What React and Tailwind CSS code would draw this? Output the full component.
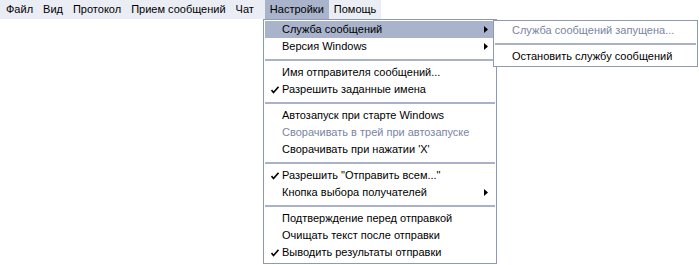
import React from "react";

const Check = () => (
  <svg width="8" height="8" viewBox="0 0 8 8" className="absolute left-[6px] top-[5px]">
    <path d="M0.5 4 L2.5 6.5 L7.5 0.8" stroke="#000" strokeWidth="1.6" fill="none" />
  </svg>
);

const Arrow = () => (
  <svg width="4" height="7" viewBox="0 0 4 7" className="absolute right-[7px] top-[5px]">
    <path d="M0 0 L4 3.5 L0 7 Z" fill="#000" />
  </svg>
);

const Item = ({ children, checked, arrow, disabled, active }) => (
  <div
    className={
      "relative h-[17px] flex items-center pl-[17px] whitespace-nowrap " +
      (active ? "bg-[#a9b3cb] " : "") +
      (disabled ? "text-[#7a84a6]" : "text-black")
    }
  >
    {checked && <Check />}
    <span className="leading-[17px]">{children}</span>
    {arrow && <Arrow />}
  </div>
);

const Sep = () => (
  <div className="h-[9px] flex items-center">
    <div className="h-[2px] w-full bg-[#a9b2c6]" />
  </div>
);

export default function App() {
  const menus = ["Файл", "Вид", "Протокол", "Прием сообщений", "Чат", "Настройки", "Помощь"];
  return (
    <div className="relative w-[699px] h-[265px] bg-white text-[11px] overflow-hidden font-['Tahoma','Liberation_Sans',sans-serif]">
      <div className="flex h-[19px] w-fit bg-[#eaedf3] pl-[1px]">
        {menus.map((m) => (
          <div
            key={m}
            className={
              "h-[19px] flex items-center px-[5px] text-black " +
              (m === "Настройки" ? "bg-[#a9b3cb] ml-[6px]" : "")
            }
          >
            {m}
          </div>
        ))}
      </div>

      <div className="absolute left-[263px] top-[19px] w-[234px] border border-[#8e9ab5] bg-white px-[1px] pt-[1px] pb-[2px]">
        <Item active arrow>Служба сообщений</Item>
        <Item arrow>Версия Windows</Item>
        <Sep />
        <Item>Имя отправителя сообщений...</Item>
        <Item checked>Разрешить заданные имена</Item>
        <Sep />
        <Item>Автозапуск при старте Windows</Item>
        <Item disabled>Сворачивать в трей при автозапуске</Item>
        <Item>Сворачивать при нажатии 'X'</Item>
        <Sep />
        <Item checked>Разрешить "Отправить всем..."</Item>
        <Item arrow>Кнопка выбора получателей</Item>
        <Sep />
        <Item>Подтверждение перед отправкой</Item>
        <Item>Очищать текст после отправки</Item>
        <Item checked>Выводить результаты отправки</Item>
      </div>

      <div className="absolute left-[493px] top-[20px] w-[205px] border border-[#8e9ab5] bg-white px-[1px] pt-[1px] pb-[1px]">
        <Item disabled>Служба сообщений запущена...</Item>
        <Sep />
        <Item>Остановить службу сообщений</Item>
      </div>
    </div>
  );
}
